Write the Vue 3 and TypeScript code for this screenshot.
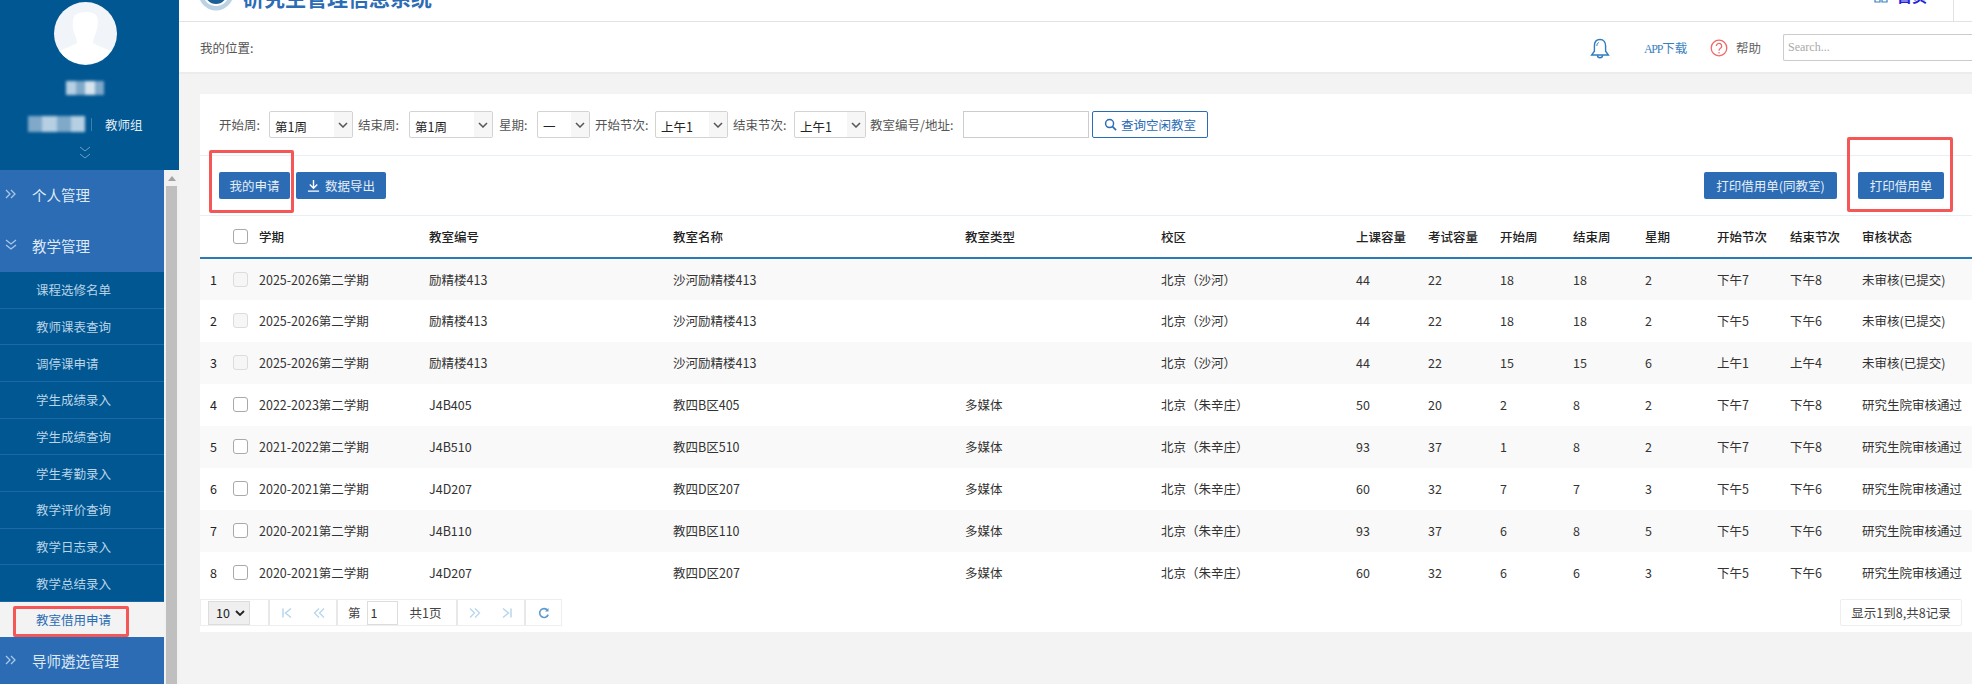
<script setup lang="ts">
interface Row {
  term: string;
  code: string;
  name: string;
  type: string;
  campus: string;
  cap: number;
  exam: number;
  from: number;
  to: number;
  day: number;
  start: string;
  end: string;
  status: string;
  locked?: boolean;
}

const subMenu = [
  "课程选修名单",
  "教师课表查询",
  "调停课申请",
  "学生成绩录入",
  "学生成绩查询",
  "学生考勤录入",
  "教学评价查询",
  "教学日志录入",
  "教学总结录入",
];

const filters = [
  { label: "开始周:", value: "第1周", lab: "l50", cls: "w84 g5" },
  { label: "结束周:", value: "第1周", lab: "l51", cls: "w84 g6" },
  { label: "星期:", value: "一", lab: "l38", cls: "w53 g5" },
  { label: "开始节次:", value: "上午1", lab: "l60", cls: "w73 g5" },
  { label: "结束节次:", value: "上午1", lab: "l61", cls: "w72 g4" },
];

const heads = ["学期", "教室编号", "教室名称", "教室类型", "校区", "上课容量", "考试容量", "开始周", "结束周", "星期", "开始节次", "结束节次", "审核状态"];
const widths = [25, 25, 170, 244, 292, 196, 195, 72, 72, 73, 72, 72, 73, 72, 119];

const passed = "研究生院审核通过";
const rows: Row[] = [
  { term: "2025-2026第二学期", code: "励精楼413", name: "沙河励精楼413", type: "", campus: "北京（沙河）", cap: 44, exam: 22, from: 18, to: 18, day: 2, start: "下午7", end: "下午8", status: "未审核(已提交)", locked: true },
  { term: "2025-2026第二学期", code: "励精楼413", name: "沙河励精楼413", type: "", campus: "北京（沙河）", cap: 44, exam: 22, from: 18, to: 18, day: 2, start: "下午5", end: "下午6", status: "未审核(已提交)", locked: true },
  { term: "2025-2026第二学期", code: "励精楼413", name: "沙河励精楼413", type: "", campus: "北京（沙河）", cap: 44, exam: 22, from: 15, to: 15, day: 6, start: "上午1", end: "上午4", status: "未审核(已提交)", locked: true },
  { term: "2022-2023第二学期", code: "J4B405", name: "教四B区405", type: "多媒体", campus: "北京（朱辛庄）", cap: 50, exam: 20, from: 2, to: 8, day: 2, start: "下午7", end: "下午8", status: passed },
  { term: "2021-2022第二学期", code: "J4B510", name: "教四B区510", type: "多媒体", campus: "北京（朱辛庄）", cap: 93, exam: 37, from: 1, to: 8, day: 2, start: "下午7", end: "下午8", status: passed },
  { term: "2020-2021第二学期", code: "J4D207", name: "教四D区207", type: "多媒体", campus: "北京（朱辛庄）", cap: 60, exam: 32, from: 7, to: 7, day: 3, start: "下午5", end: "下午6", status: passed },
  { term: "2020-2021第二学期", code: "J4B110", name: "教四B区110", type: "多媒体", campus: "北京（朱辛庄）", cap: 93, exam: 37, from: 6, to: 8, day: 5, start: "下午5", end: "下午6", status: passed },
  { term: "2020-2021第二学期", code: "J4D207", name: "教四D区207", type: "多媒体", campus: "北京（朱辛庄）", cap: 60, exam: 32, from: 6, to: 6, day: 3, start: "下午5", end: "下午6", status: passed },
];
</script>

<template>
  <div class="page">
    <aside class="side">
      <div class="profile">
        <div class="avatar">
          <svg viewBox="0 0 63 63" width="63" height="63">
            <path d="M21 13c5-4 17-4 21 0 3 4 2 14-1 20-1 3-2 5-2 8 4 3 12 5 18 8-6 8-15 13-26 13S11 57 5 49c6-3 14-5 18-8 0-3-1-5-2-8-3-6-3-16 0-20z" fill="#fff" />
          </svg>
        </div>
        <div class="mosaic name">
          <i></i><i class="m2"></i><i class="m3"></i><i class="m2"></i>
        </div>
        <div class="org">
          <div class="mosaic dept"><i class="m2"></i><i></i><i class="m2"></i><i></i></div>
          <span class="org-sep"></span>
          <span class="org-text">教师组</span>
        </div>
        <svg class="profile-arrow" viewBox="0 0 14 13" width="14" height="13">
          <path d="M2 1l5 4 5-4M2 8l5 4 5-4" fill="none" stroke="#6f9fc6" stroke-width="1" />
        </svg>
      </div>

      <div class="menu-wrap">
        <nav class="menu">
          <div class="group g-first">
            <svg viewBox="0 0 12 10" width="12" height="10"><path d="M1 1l4 4-4 4M6 1l4 4-4 4" fill="none" stroke="#a9c8e6" stroke-width="1.3" /></svg>
            个人管理
          </div>
          <div class="group g-second">
            <svg viewBox="0 0 12 12" width="12" height="12"><path d="M1 1l5 4 5-4M1 6l5 4 5-4" fill="none" stroke="#a9c8e6" stroke-width="1.3" /></svg>
            教学管理
          </div>
          <a v-for="item in subMenu" :key="item" class="sub">{{ item }}</a>
          <a class="sub active">教室借用申请</a>
          <div class="group g-last">
            <svg viewBox="0 0 12 10" width="12" height="10"><path d="M1 1l4 4-4 4M6 1l4 4-4 4" fill="none" stroke="#a9c8e6" stroke-width="1.3" /></svg>
            导师遴选管理
          </div>
        </nav>
        <div class="scrollbar">
          <svg viewBox="0 0 8 5" width="8" height="5"><path d="M0 5l4-5 4 5z" fill="#a3a3a3" /></svg>
          <div class="thumb"></div>
        </div>
      </div>
    </aside>

    <main class="main">
      <header class="topbar">
        <svg class="logo" viewBox="0 0 36 36" width="36" height="36">
          <circle cx="18" cy="18" r="17.5" fill="#bcd3e4" />
          <circle cx="18" cy="18" r="13" fill="#fff" />
          <circle cx="18" cy="18" r="11" fill="#1c5f94" />
          <circle cx="18" cy="18" r="6" fill="#fff" />
        </svg>
        <span class="title">研究生管理信息系统</span>
        <span class="home">
          <svg viewBox="0 0 14 14" width="14" height="14"><path d="M1 1h5v5H1zM8 1h5v5H8zM1 8h5v5H1zM8 8h5v5H8z" fill="none" stroke="#3a7fc1" stroke-width="1.2" /></svg>
          <b>首页</b>
        </span>
        <span class="top-sep"></span>
      </header>

      <div class="crumb">
        <span class="crumb-text">我的位置:</span>
        <svg class="bell" viewBox="0 0 22 22" width="22" height="22">
          <path d="M11 2.500c-3.800 0-5.600 3-5.600 6.500v5.200L2.600 18h16.800l-2.800-3.800V9c0-3.500-1.800-6.500-5.600-6.500z" fill="none" stroke="#2f7cc0" stroke-width="1.400" />
          <path d="M8.500 18.200a2.500 2.500 0 0 0 5 0" fill="none" stroke="#2f7cc0" stroke-width="1.400" />
          <path d="M7.800 9c0-1.800.9-3 2-3.500" fill="none" stroke="#2f7cc0" stroke-width="1" />
        </svg>
        <span class="app"><span class="app-latin">APP</span>下载</span>
        <svg class="help" viewBox="0 0 18 18" width="18" height="18">
          <circle cx="9" cy="9" r="7.800" fill="none" stroke="#ef6a6a" stroke-width="1.300" />
          <path d="M6.300 7a2.700 2.700 0 1 1 4.200 2.300c-.9.600-1.500 1.100-1.500 2.400" fill="none" stroke="#ef6a6a" stroke-width="1.300" />
          <circle cx="9" cy="13.800" r=".8" fill="#ef6a6a" />
        </svg>
        <span class="help-text">帮助</span>
        <input class="search" placeholder="Search..." />
      </div>

      <div class="content">
        <section class="card">
          <div class="filters">
            <template v-for="f in filters" :key="f.label">
              <label class="flabel" :class="f.lab">{{ f.label }}</label>
              <span class="sel-wrap" :class="f.cls">
                <select class="sel"><option>{{ f.value }}</option></select>
                <span class="sel-arrow">
                  <svg viewBox="0 0 10 6" width="10" height="6"><path d="M1 1l4 4 4-4" fill="none" stroke="#555" stroke-width="1.500" /></svg>
                </span>
              </span>
            </template>
            <label class="flabel l93">教室编号/地址:</label>
            <input class="room-input" />
            <button class="query">
              <svg viewBox="0 0 14 14" width="13" height="13"><circle cx="6" cy="6" r="4.300" fill="none" stroke="#2b6cb5" stroke-width="1.600" /><path d="M9.200 9.200L13 13" stroke="#2b6cb5" stroke-width="1.800" /></svg>
              查询空闲教室
            </button>
          </div>

          <div class="toolbar">
            <button class="btn mine">我的申请</button>
            <button class="btn export">
              <svg viewBox="0 0 14 14" width="13" height="13"><path d="M7 1v8M3 6l4 4 4-4M1 13h12" fill="none" stroke="#fff" stroke-width="1.500" /></svg>
              数据导出
            </button>
            <span class="spacer"></span>
            <button class="btn print-same">打印借用单(同教室)</button>
            <button class="btn print">打印借用单</button>
          </div>

          <table class="grid">
            <colgroup>
              <col v-for="(w, i) in widths" :key="i" :style="{ width: w + 'px' }" />
            </colgroup>
            <thead>
              <tr>
                <th></th>
                <th class="check-cell"><span class="check"></span></th>
                <th v-for="h in heads" :key="h">{{ h }}</th>
              </tr>
            </thead>
            <tbody>
              <tr v-for="(r, i) in rows" :key="i">
                <td class="idx">{{ i + 1 }}</td>
                <td class="check-cell"><span class="check" :class="{ locked: r.locked }"></span></td>
                <td>{{ r.term }}</td>
                <td>{{ r.code }}</td>
                <td>{{ r.name }}</td>
                <td>{{ r.type }}</td>
                <td>{{ r.campus }}</td>
                <td>{{ r.cap }}</td>
                <td>{{ r.exam }}</td>
                <td>{{ r.from }}</td>
                <td>{{ r.to }}</td>
                <td>{{ r.day }}</td>
                <td>{{ r.start }}</td>
                <td>{{ r.end }}</td>
                <td>{{ r.status }}</td>
              </tr>
            </tbody>
          </table>

          <div class="pager-row">
            <div class="pager">
              <div class="pg pg-size">
                <span class="size">10
                  <svg viewBox="0 0 10 6" width="10" height="6"><path d="M1 1l4 4 4-4" fill="none" stroke="#222" stroke-width="1.800" /></svg>
                </span>
              </div>
              <div class="pg pg-nav">
                <svg viewBox="0 0 12 12" width="12" height="12"><path d="M2 1.500v9M10 1.500L4.500 6l5.500 4.500" fill="none" stroke="#b8d6ec" stroke-width="1.500" /></svg>
                <svg viewBox="0 0 12 12" width="12" height="12"><path d="M6 1.500L1.500 6 6 10.500M11 1.500L6.500 6l4.500 4.500" fill="none" stroke="#b8d6ec" stroke-width="1.300" /></svg>
              </div>
              <div class="pg pg-page">
                <span>第</span>
                <input class="page-input" value="1" />
                <span>共1页</span>
              </div>
              <div class="pg pg-nav">
                <svg viewBox="0 0 12 12" width="12" height="12"><path d="M1 1.500L5.500 6 1 10.500M6 1.500L10.500 6 6 10.500" fill="none" stroke="#b8d6ec" stroke-width="1.300" /></svg>
                <svg viewBox="0 0 12 12" width="12" height="12"><path d="M10 1.500v9M2 1.500L7.500 6 2 10.500" fill="none" stroke="#b8d6ec" stroke-width="1.500" /></svg>
              </div>
              <div class="pg pg-refresh">
                <svg viewBox="0 0 12 12" width="12" height="12"><path d="M10.200 7.600A4.400 4.400 0 1 1 9.600 3.400" fill="none" stroke="#5b9bd0" stroke-width="1.600" /><path d="M10.500 1v3.500H7z" fill="#5b9bd0" /></svg>
              </div>
            </div>
            <div class="info">显示1到8,共8记录</div>
          </div>
        </section>
      </div>
    </main>

    <span class="mark mark-menu"></span>
    <span class="mark mark-mine"></span>
    <span class="mark mark-print"></span>
  </div>
</template>

<style>
html,
body {
  margin: 0;
  overflow: hidden;
}
</style>

<style scoped>
.page {
  position: relative;
  display: flex;
  width: 1972px;
  height: 684px;
  overflow: hidden;
  background: #f3f3f3;
  font-family: "Noto Sans CJK SC", "Noto Sans", sans-serif;
  font-size: 12.5px;
  color: #333;
}

.side {
  width: 179px;
  flex: none;
  display: flex;
  flex-direction: column;
}

.profile {
  height: 170px;
  flex: none;
  background: #005792;
  display: flex;
  flex-direction: column;
  align-items: center;
  box-sizing: border-box;
  padding: 2px 9px 0 0;
}

.avatar {
  width: 63px;
  height: 63px;
  border-radius: 50%;
  background: #f1f5f9;
  overflow: hidden;
}

.avatar svg {
  display: block;
}

.mosaic {
  display: flex;
  filter: blur(1.5px);
}

.mosaic i {
  flex: 1;
  background: #b6cfe2;
}

.mosaic i.m2 {
  background: #7fa8c9;
}

.mosaic i.m3 {
  background: #d7e4ee;
}

.name {
  width: 38px;
  height: 14px;
  margin-top: 16px;
}

.org {
  display: flex;
  align-items: center;
  margin-top: 18px;
  height: 22px;
  width: 100%;
  box-sizing: border-box;
  padding-left: 28px;
}

.dept {
  width: 57px;
  height: 16px;
}

.org-sep {
  width: 1px;
  height: 13px;
  background: #3f7fae;
  margin: 0 13px 0 6px;
}

.org-text {
  color: #e3edf5;
  white-space: nowrap;
}

.profile-arrow {
  margin-top: 11px;
}

.menu-wrap {
  flex: 1;
  display: flex;
  min-height: 0;
  background: #f3f3f3;
}

.menu {
  width: 164px;
  flex: none;
  display: flex;
  flex-direction: column;
}

.group {
  display: flex;
  align-items: center;
  background: #2b6cb5;
  color: #dfe9f4;
  font-size: 14.5px;
  box-sizing: border-box;
  padding-left: 5px;
}

.group svg {
  margin-right: 15px;
  flex: none;
}

.g-first {
  height: 50px;
  padding-bottom: 2px;
}

.g-second {
  height: 52px;
  padding-bottom: 2px;
}

.g-last {
  height: 47px;
  flex: none;
}

.sub {
  display: flex;
  align-items: center;
  height: 36.67px;
  flex: none;
  box-sizing: border-box;
  padding-left: 36px;
  background: #005792;
  color: #b9d3e7;
  border-bottom: 1px solid #1c68a8;
}

.sub.active {
  height: 35px;
  background: #f3f3f3;
  color: #2b6cb5;
  border-bottom: 0;
}

.scrollbar {
  width: 15px;
  flex: none;
  background: #f1f1f1;
  display: flex;
  flex-direction: column;
  align-items: center;
  padding-top: 6px;
  box-sizing: border-box;
}

.scrollbar svg {
  flex: none;
}

.thumb {
  width: 11px;
  flex: 1;
  margin-top: 5px;
  background: #bfbfbf;
}

.main {
  flex: 1;
  min-width: 0;
  display: flex;
  flex-direction: column;
}

.topbar {
  height: 22px;
  flex: none;
  box-sizing: border-box;
  background: #fff;
  border-bottom: 1px solid #e2e2e2;
  display: flex;
  align-items: flex-end;
  overflow: hidden;
  padding-left: 19px;
}

.logo {
  flex: none;
  margin-bottom: 10px;
}

.title {
  margin-left: 9px;
  margin-bottom: 9px;
  line-height: 30px;
  font-size: 21px;
  font-weight: 700;
  color: #2b6cb5;
  white-space: nowrap;
}

.home {
  margin-left: auto;
  display: flex;
  align-items: center;
  margin-bottom: 15px;
  color: #2222dd;
  font-size: 15px;
  line-height: 20px;
}

.home svg {
  margin-right: 9px;
}

.top-sep {
  width: 1px;
  height: 21px;
  background: #e2e2e2;
  margin-left: 26px;
  margin-right: 18px;
}

.crumb {
  height: 52px;
  flex: none;
  box-sizing: border-box;
  background: #fff;
  border-bottom: 2px solid #ececec;
  display: flex;
  align-items: center;
  padding: 1px 0 0 21px;
  color: #555;
}

.crumb-text {
  width: 1389px;
  flex: none;
}

.bell {
  flex: none;
}

.app {
  margin-left: 33px;
  color: #3a7fc1;
  width: 43px;
  white-space: nowrap;
}

.app-latin {
  font-family: "Liberation Serif", serif;
  font-size: 12px;
  letter-spacing: -1.3px;
}

.help {
  margin-left: 23px;
  flex: none;
}

.help-text {
  margin-left: 8px;
  color: #666;
}

.search {
  margin-left: 22px;
  flex: 1;
  min-width: 0;
  height: 27px;
  box-sizing: border-box;
  border: 1px solid #ccc;
  border-right: 0;
  border-radius: 2px 0 0 2px;
  padding: 0 4px;
  font-family: "Liberation Serif", serif;
  font-size: 12px;
  outline: none;
}

.search::placeholder {
  color: #aaa;
}

.content {
  flex: 1;
  min-height: 0;
  padding: 20px 0 0 21px;
}

.card {
  background: #fff;
  height: 538px;
}

.filters {
  height: 62px;
  box-sizing: border-box;
  border-bottom: 1px solid #e9f0f5;
  display: flex;
  align-items: center;
  padding: 0 0 0 19px;
  color: #555;
}

.flabel {
  white-space: nowrap;
  flex: none;
}

.l50 {
  width: 50px;
}

.l51 {
  width: 51px;
}

.l38 {
  width: 38px;
}

.l60 {
  width: 60px;
}

.l61 {
  width: 61px;
}

.l93 {
  width: 93px;
}

.sel-wrap {
  position: relative;
  height: 27px;
  box-sizing: border-box;
  display: inline-block;
  flex: none;
}

.w84 {
  width: 84px;
}

.w53 {
  width: 53px;
}

.w73 {
  width: 73px;
}

.w72 {
  width: 72px;
}

.g6 {
  margin-right: 6px;
}

.g5 {
  margin-right: 5px;
}

.g4 {
  margin-right: 4px;
}

.sel {
  appearance: none;
  width: 100%;
  height: 100%;
  box-sizing: border-box;
  border: 1px solid #d3d3d3;
  border-radius: 2px;
  background: #fff;
  padding: 3px 0 0 5px;
  font-family: inherit;
  font-size: 12.5px;
  color: #222;
  outline: none;
}

.sel-arrow {
  position: absolute;
  top: 1px;
  right: 1px;
  bottom: 1px;
  width: 18px;
  background: #f6f6f6;
  display: flex;
  align-items: center;
  justify-content: center;
}

.room-input {
  width: 126px;
  height: 27px;
  box-sizing: border-box;
  border: 1px solid #ccc;
  outline: none;
  flex: none;
}

.query {
  width: 116px;
  height: 27px;
  margin-left: 3px;
  box-sizing: border-box;
  border: 1px solid #2b6cb5;
  border-radius: 2px;
  background: #fff;
  color: #2b6cb5;
  font-family: inherit;
  font-size: 12.5px;
  display: flex;
  align-items: center;
  justify-content: center;
  gap: 4px;
  padding: 0;
}

.toolbar {
  height: 60px;
  box-sizing: border-box;
  border-bottom: 1px solid #e9f0f5;
  display: flex;
  align-items: center;
  padding: 0 28px 0 19px;
}

.spacer {
  flex: 1;
}

.btn {
  height: 27px;
  box-sizing: border-box;
  border: 0;
  border-radius: 2px;
  background: #2b6cb5;
  color: #e6eef7;
  font-family: inherit;
  font-size: 12.5px;
  display: flex;
  align-items: center;
  justify-content: center;
  gap: 5px;
  padding: 0;
}

.mine {
  width: 71px;
}

.export {
  width: 90px;
  margin-left: 6px;
}

.print-same {
  width: 133px;
}

.print {
  width: 86px;
  margin-left: 21px;
}

.grid {
  width: 1772px;
  table-layout: fixed;
  border-collapse: collapse;
}

.grid th,
.grid td {
  box-sizing: border-box;
  padding: 0 0 0 9px;
  text-align: left;
  white-space: nowrap;
  overflow: hidden;
}

.grid th {
  height: 42px;
  font-weight: 500;
  color: #222;
  border-bottom: 2px solid #2b7ab5;
}

.grid td {
  height: 42px;
  padding-bottom: 1px;
  color: #333;
}

.grid tbody tr:nth-child(odd) td {
  background: #f9f9f9;
}

.grid .check-cell {
  padding-left: 8px;
}

.grid .idx {
  padding-left: 10px;
  color: #222;
}

.check {
  display: block;
  width: 15px;
  height: 15px;
  box-sizing: border-box;
  border: 1px solid #a9a9a9;
  border-radius: 3px;
  background: #fff;
}

.check.locked {
  border-color: #dcdcdc;
  background: #f6f6f6;
}

.pager-row {
  display: flex;
  justify-content: space-between;
  align-items: flex-start;
  padding: 5px 10px 0 0;
}

.pager {
  display: flex;
  height: 27px;
  box-sizing: border-box;
  border: 1px solid #eeeeee;
  width: 362px;
}

.pg {
  display: flex;
  align-items: center;
  box-sizing: border-box;
  border-right: 2px solid #e8e8e8;
  flex: none;
}

.pg-size {
  width: 69px;
  padding-left: 7px;
}

.size {
  width: 42px;
  height: 24px;
  box-sizing: border-box;
  border: 1px solid #dcdcdc;
  background: #efefef;
  display: flex;
  align-items: center;
  gap: 5px;
  padding-left: 7px;
  color: #222;
}

.pg-nav {
  width: 68px;
  padding-left: 11px;
  gap: 20px;
}

.pg-page {
  width: 120px;
  padding-left: 10px;
  color: #444;
}

.page-input {
  width: 31px;
  height: 24px;
  box-sizing: border-box;
  margin: 0 12px 0 6px;
  border: 1px solid #ddd;
  outline: none;
  padding: 0 3px;
  font-family: inherit;
  font-size: 12.5px;
  color: #333;
}

.pg-refresh {
  flex: 1;
  border-right: 0;
  justify-content: center;
}

.info {
  width: 122px;
  height: 27px;
  box-sizing: border-box;
  border: 1px solid #eeeeee;
  border-radius: 2px;
  display: flex;
  align-items: center;
  justify-content: center;
  color: #444;
}

.mark {
  position: absolute;
  box-sizing: border-box;
  border: 3px solid #f55656;
  border-radius: 2px;
}

.mark-menu {
  left: 13px;
  top: 606px;
  width: 116px;
  height: 31px;
}

.mark-mine {
  left: 209px;
  top: 150px;
  width: 85px;
  height: 63px;
}

.mark-print {
  left: 1847px;
  top: 137px;
  width: 106px;
  height: 75px;
}
</style>
